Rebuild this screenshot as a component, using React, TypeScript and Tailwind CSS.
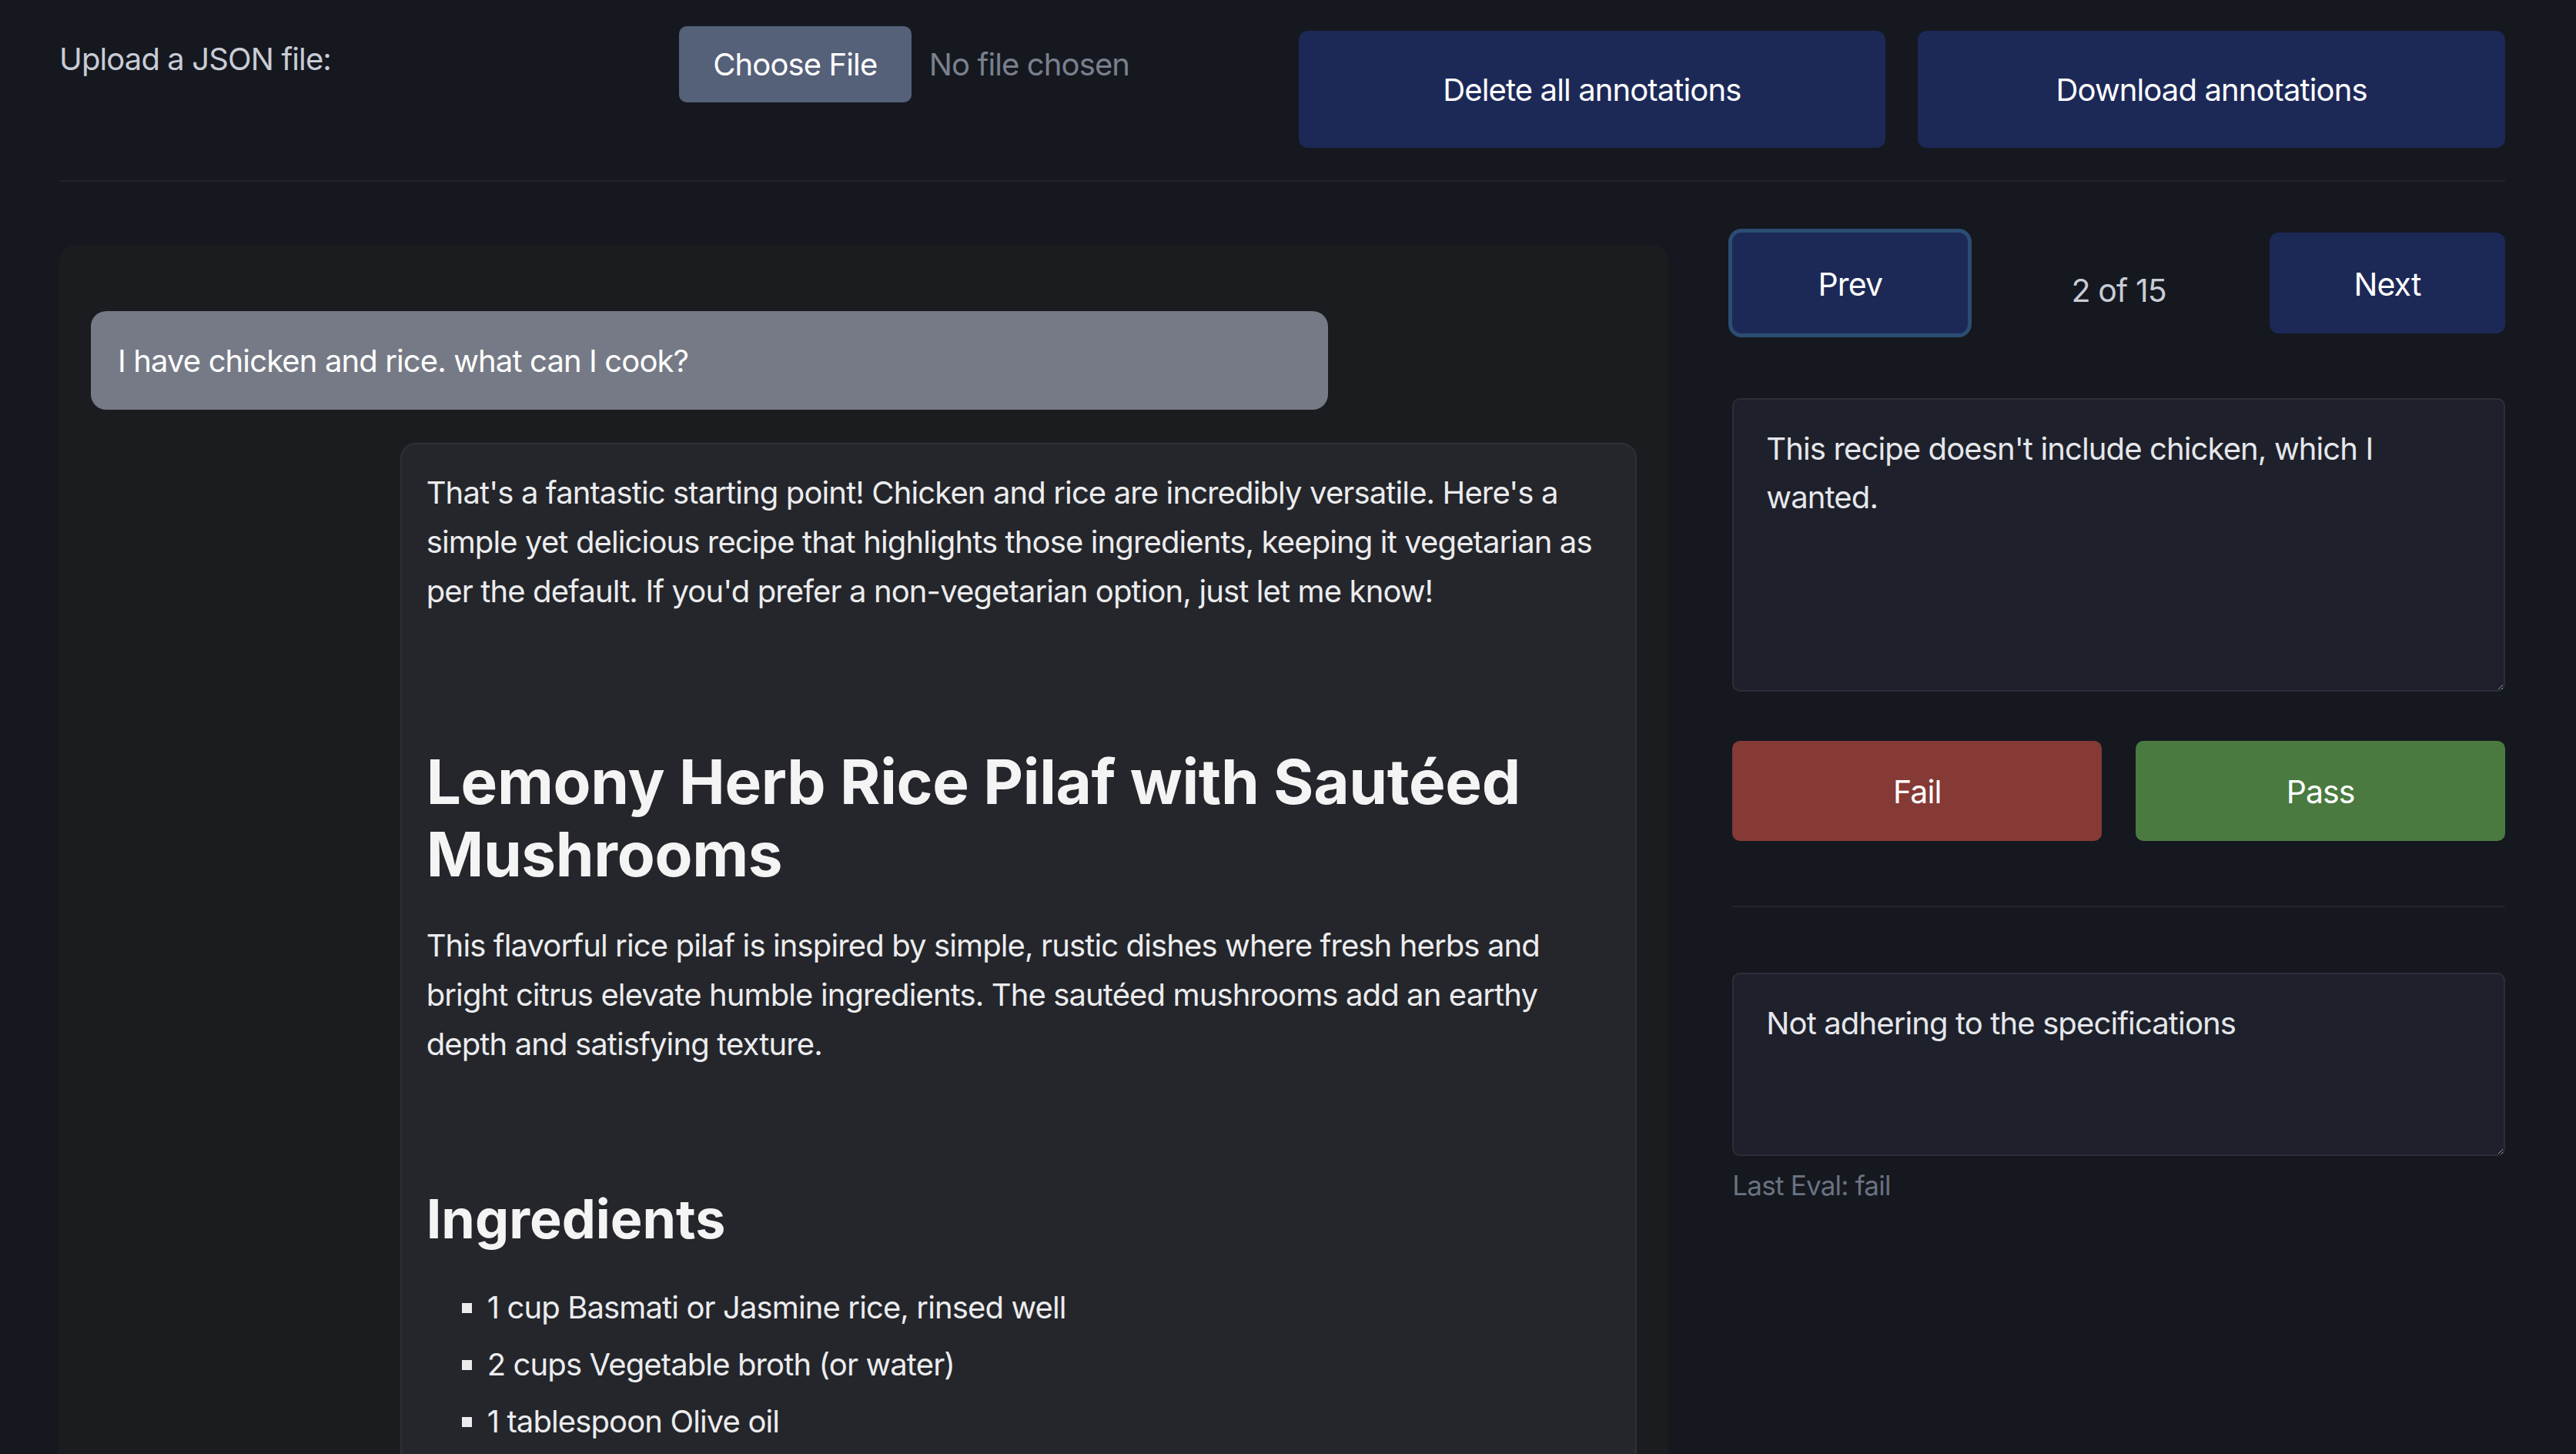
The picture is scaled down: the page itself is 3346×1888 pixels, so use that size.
import { useState } from "react";

const ingredients = [
	"1 cup Basmati or Jasmine rice, rinsed well",
	"2 cups Vegetable broth (or water)",
	"1 tablespoon Olive oil",
];

export default function App() {
	const [index] = useState(2);
	const total = 15;

	return (
		<div className="min-h-screen bg-[#15181f] pl-[77px] pr-[92px] pt-[34px] font-['Inter',sans-serif] overflow-hidden h-[1888px]">
			{/* header */}
			<div className="grid grid-cols-4 gap-x-[42px] items-start">
				<label className="mt-[13px] text-[40px] leading-[60px] tracking-[-0.022em] text-[#c8ccd6]">
					Upload a JSON file:
				</label>
				<div className="flex items-center gap-[23px]">
					<button className="h-[99px] w-[302px] rounded-[10px] bg-[#556079] text-white text-[40px] leading-[60px] tracking-[-0.022em]">
						Choose File
					</button>
					<span className="text-[40px] leading-[60px] tracking-[-0.022em] text-[#7a808d]">
						No file chosen
					</span>
				</div>
				<button className="mt-[6px] h-[152px] rounded-[12px] bg-[#1c2957] pt-[2px] text-white text-[40px] tracking-[-0.022em]">
					Delete all annotations
				</button>
				<button className="mt-[6px] h-[152px] rounded-[12px] bg-[#1c2957] pt-[2px] text-white text-[40px] tracking-[-0.022em]">
					Download annotations
				</button>
			</div>
			<div className="mt-[42px] h-[2px] bg-[#22252e]" />

			<div className="grid grid-cols-3 gap-x-[83px] mt-[66px] items-start">
				{/* conversation */}
				<div className="col-span-2 mt-[16px] rounded-t-[20px] bg-[#1b1c1f] px-[41px] pt-[86px] pb-[300px]">
					<div className="w-[80%] rounded-[20px] bg-[#767a86] px-[35px] pt-[35px] pb-[33px] text-[40px] leading-[60px] tracking-[-0.022em] text-white">
						I have chicken and rice. what can I cook?
					</div>
					<div className="ml-auto mt-[43px] w-[80%] rounded-[20px] border-2 border-[#2e3035] bg-[#24262b] px-[32px] pt-[31px] pb-[200px] text-[40px] leading-[64px] tracking-[-0.022em] text-[#ececee]">
						<p className="mb-[168px]">
							That's a fantastic starting point! Chicken and rice are incredibly versatile. Here's a
							simple yet delicious recipe that highlights those ingredients, keeping it vegetarian as
							per the default. If you'd prefer a non-vegetarian option, just let me know!
						</p>
						<h1 className="mb-[40px] text-[80px] leading-[94px] font-bold tracking-[-0.004em] text-[#f4f4f5]">
							Lemony Herb Rice Pilaf with Sautéed Mushrooms
						</h1>
						<p className="mb-[154px]">
							This flavorful rice pilaf is inspired by simple, rustic dishes where fresh herbs and
							bright citrus elevate humble ingredients. The sautéed mushrooms add an earthy depth and
							satisfying texture.
						</p>
						<h2 className="mb-[42px] text-[70px] leading-[82px] font-bold tracking-normal text-[#f4f4f5]">
							Ingredients
						</h2>
						<ul className="list-[square] pl-[79px] flex flex-col gap-[10px]">
							{ingredients.map((item) => (
								<li key={item}>{item}</li>
							))}
						</ul>
					</div>
				</div>

				{/* evaluation panel */}
				<div className="flex flex-col">
					<div className="flex items-center justify-between">
						<button className="w-[306px] h-[131px] rounded-[12px] bg-[#1c2957] pt-[4px] ring-[5px] ring-[#2c4d73] text-white text-[41px] tracking-[-0.022em]">
							Prev
						</button>
						<span className="mt-[20px] text-[41px] tracking-[-0.022em] text-[#c8ccd6]">
							{index} of {total}
						</span>
						<button className="w-[306px] h-[131px] rounded-[12px] bg-[#1c2957] pt-[4px] text-white text-[41px] tracking-[-0.022em]">
							Next
						</button>
					</div>
					<textarea
						className="mt-[84px] h-[381px] rounded-[10px] border-2 border-[#2c2f3a] bg-[#1e212b] px-[42px] pt-[32px] text-[40px] leading-[63px] tracking-[-0.022em] text-[#e5e7eb] outline-none"
						defaultValue="This recipe doesn't include chicken, which I wanted."
					/>
					<div className="mt-[64px] grid grid-cols-2 gap-x-[44px]">
						<button className="h-[130px] rounded-[10px] bg-[#853a35] pt-[4px] text-white text-[41px] tracking-[-0.022em]">
							Fail
						</button>
						<button className="h-[130px] rounded-[10px] bg-[#4a7a40] pt-[4px] text-white text-[41px] tracking-[-0.022em]">
							Pass
						</button>
					</div>
					<div className="mt-[84px] h-[2px] bg-[#22252e]" />
					<textarea
						className="mt-[85px] h-[238px] rounded-[10px] border-2 border-[#2c2f3a] bg-[#1e212b] px-[42px] pt-[32px] text-[40px] leading-[63px] tracking-[-0.022em] text-[#e5e7eb] outline-none"
						defaultValue="Not adhering to the specifications"
					/>
					<p className="mt-[13px] text-[35px] leading-[50px] tracking-[-0.022em] text-[#6b7280]">
						Last Eval: fail
					</p>
				</div>
			</div>
		</div>
	);
}
